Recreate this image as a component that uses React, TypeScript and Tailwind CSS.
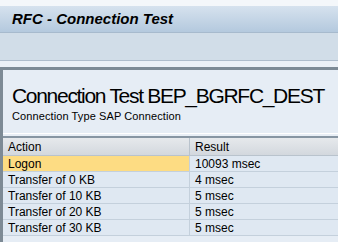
export default function App() {
  const rows = [
    { action: 'Logon', result: '10093 msec', selected: true },
    { action: 'Transfer of 0 KB', result: '4 msec' },
    { action: 'Transfer of 10 KB', result: '5 msec' },
    { action: 'Transfer of 20 KB', result: '5 msec' },
    { action: 'Transfer of 30 KB', result: '5 msec' },
  ];

  return (
    <div
      className="w-[338px] h-[242px] overflow-hidden bg-[#eaf0f6] text-black"
      style={{ fontFamily: '"Liberation Sans", Arial, sans-serif' }}
    >
      <div className="h-[6px] bg-[#f4f7fa]" />
      <div className="h-[27px] flex items-center pl-[12px] bg-gradient-to-b from-[#d6e2ee] to-[#b4c9de] border-b border-[#a7bacd]">
        <span className="text-[15px] font-bold italic">RFC - Connection Test</span>
      </div>
      <div className="h-[28px] bg-[#d1dde8] border-b border-[#aebccb]" />
      <div className="h-[6px] bg-[#ebf0f6]" />
      <div className="border-t-[3px] border-l-[3px] border-[#7d8a95] bg-[#e6edf5] h-full">
        <div className="pl-[9px] pt-[13px]">
          <div className="text-[21px] leading-[25px] whitespace-nowrap tracking-[-1.3px]">
            Connection Test BEP_BGRFC_DEST
          </div>
          <div className="text-[11px] leading-[12px] mt-[2px] whitespace-nowrap tracking-[0.1px]">
            Connection Type SAP Connection
          </div>
        </div>
        <div className="mt-[11px] border-t border-white h-[3px] bg-[#e9eff6]" />
        <div className="border-t-[2px] border-[#8796a3]">
          <div className="flex h-[18px] bg-gradient-to-b from-[#e6e9ec] to-[#d3d8de] border-b border-[#b9c3cd] text-[12px]">
            <div className="w-[187px] pl-[5px] flex items-center border-r border-[#b9c3cd]">Action</div>
            <div className="flex-1 pl-[5px] flex items-center">Result</div>
          </div>
          {rows.map((r) => (
            <div key={r.action} className="flex h-[16px] border-b border-[#c4d0dc] text-[12px]">
              <div
                className={
                  'w-[187px] pl-[5px] flex items-center border-r border-[#c4d0dc] ' +
                  (r.selected ? 'bg-[#fddc83]' : 'bg-[#dfe8f2]')
                }
              >
                {r.action}
              </div>
              <div className="flex-1 pl-[5px] flex items-center bg-[#dfe8f2]">{r.result}</div>
            </div>
          ))}
        </div>
      </div>
    </div>
  );
}
